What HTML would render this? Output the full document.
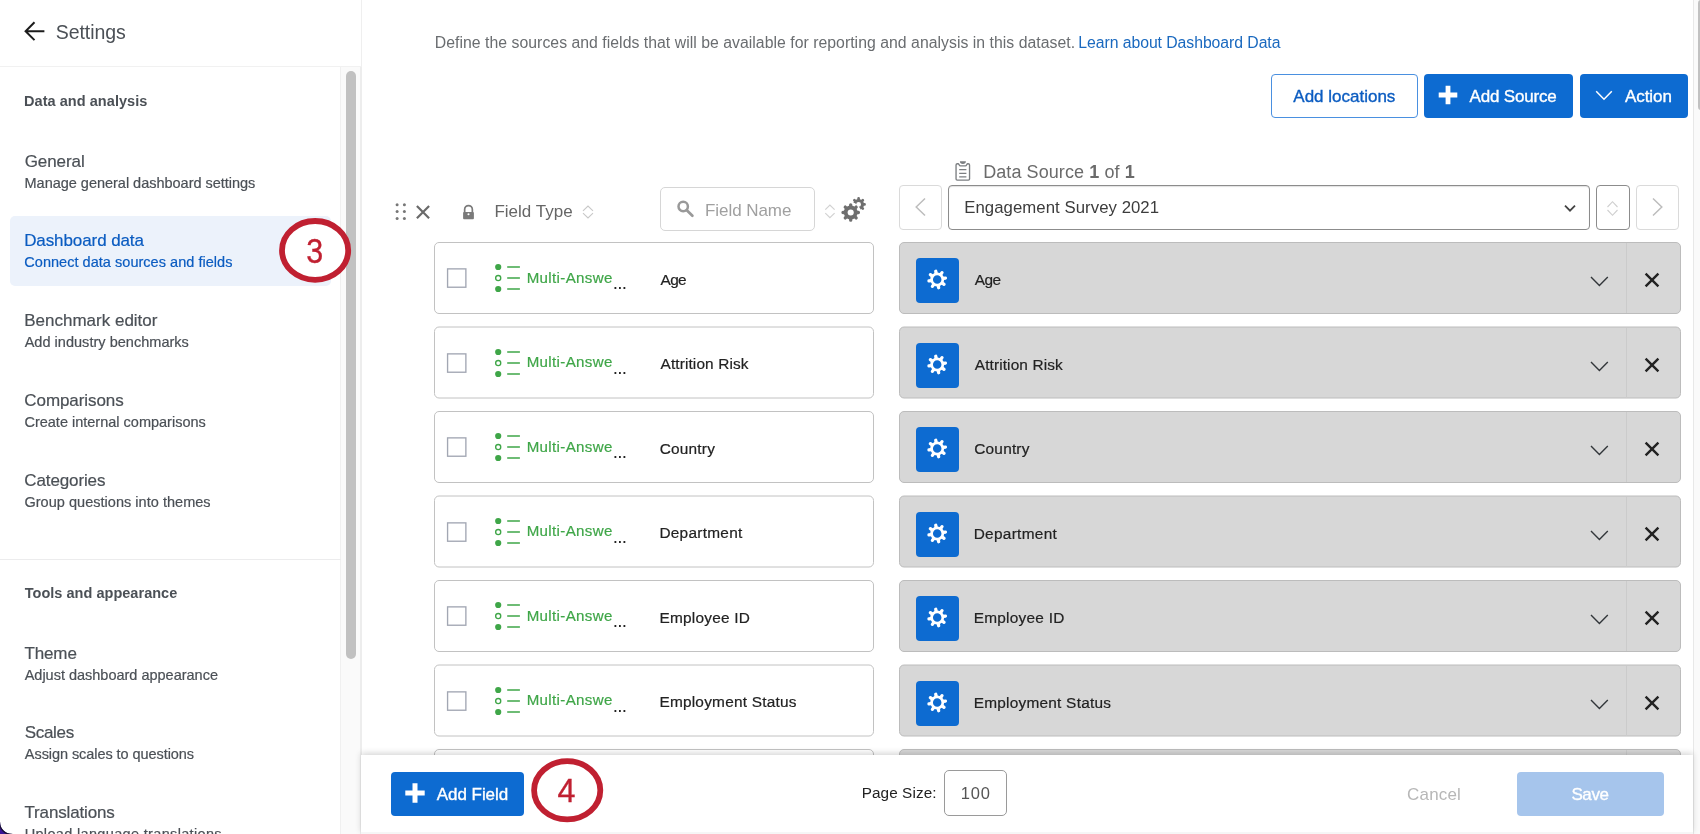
<!DOCTYPE html>
<html>
<head>
<meta charset="utf-8">
<title>Settings - Dashboard data</title>
<style>
*{box-sizing:border-box;margin:0;padding:0}
html,body{width:1700px;height:834px;overflow:hidden;background:#fff}
body{font-family:"Liberation Sans",sans-serif;position:relative;color:#32363a;will-change:transform}
.abs{position:absolute}
.t{position:absolute;white-space:nowrap;line-height:1}
/* sidebar */
#side{left:0;top:0;width:341px;height:834px;background:#fff}
#sidehead{left:0;top:0;width:362px;height:67px;background:#fff;border-bottom:1px solid #f1f1f1;border-right:1px solid #efefef}
#gutter{left:340px;top:67px;width:22px;height:767px;background:#fafafa;border-right:2px solid #ededed;border-left:1px solid #f0f0f0}
#thumb{left:345.700px;top:71px;width:10.500px;height:588px;background:#c1c1c1;border-radius:5.250px}
#sel{left:10px;top:216px;width:321px;height:70px;background:#ecf2fb;border-radius:5px}
#sdiv{left:0;top:559px;width:341px;height:1px;background:#ececed}
.h1{font-size:17px;color:#4b5056;-webkit-text-stroke:.2px currentColor}
.h2{font-size:14.5px;color:#4b5056;-webkit-text-stroke:.2px currentColor}
.hb{font-size:14.5px;font-weight:bold;color:#4b5056}
.blue{color:#0b5cc1}
.circ{border:5px solid #b8202f;border-radius:50%;background:#fff}
.cnum{color:#c02031;font-size:36px}
/* main */
#vtrack{left:1693px;top:0;width:7px;height:834px;background:#fafafa;border-left:1px solid #e8e8e8}
#vthumb{left:1698px;top:0;width:6px;height:110px;background:#c1c1c1;border-radius:3px}
.btn{border-radius:4px}
.btn.pr{background:#0d6bd1}
.btn.ol{background:#fff;border:1px solid #4a90e0}
.bt{font-size:17px;-webkit-text-stroke:0.35px currentColor}
#sbox{left:660px;top:187px;width:155px;height:44px;border:1.500px solid #d6d6d6;border-radius:5px;background:#fff}
.nb{border:1px solid #dadada;border-radius:4px;background:#fff}
#selbox{left:948px;top:185px;width:642px;height:45px;border:1px solid #8c8c8c;border-radius:4px;background:#fff;box-shadow:inset 0 1px 1px rgba(0,0,0,.12)}
#sortb{left:1596px;top:185px;width:34px;height:45px;border:1px solid #8c8c8c;border-radius:4px;background:#fff}
#rows{left:434px;top:242px;width:1259px;height:513px;overflow:hidden}
.row{position:absolute;left:0;width:1247px;height:72px}
.lc{position:absolute;left:0;top:0;width:440px;height:72px;border:1px solid transparent}
.lc::before{content:"";position:absolute;left:-1px;top:-1px;width:440px;height:72px;box-sizing:border-box;border:1px solid #c2c2c2;border-radius:5px;background:#fff}
.rc{position:absolute;left:465px;top:0;width:782px;height:72px;border:1px solid transparent}
.rc::before{content:"";position:absolute;left:-1px;top:-1px;width:782px;height:72px;box-sizing:border-box;border:1px solid #bcbcbc;border-radius:5px;background:#d7d7d7}
.hf .lc::before,.hf .rc::before{top:-1.500px;transform:translateY(.5px)}
.cb{position:absolute;left:11px;top:24px}
.ma{position:absolute;left:60px;top:20px}
.ft{left:92px;top:26.3px;font-size:15.1px;color:#3fa648;-webkit-text-stroke:.2px #3fa648}
.dots{left:177.650px;top:30px;font-size:19px;color:#222;letter-spacing:-.68px}
.fn{left:225px;top:28.4px;font-size:15.4px;-webkit-text-stroke:.2px #222;letter-spacing:.28px;color:#222}
.gb{position:absolute;left:16px;top:15px;width:43px;height:45px;border-radius:4px;background:#0d6bd1}
.gb svg{position:absolute;left:0;top:0}
.rn{left:75px;top:28.6px;font-size:15.4px;-webkit-text-stroke:.2px #222;letter-spacing:.28px;color:#222}
.chv{position:absolute;left:690px;top:33px}
.dv{position:absolute;left:726px;top:0;width:1px;height:70px;background:#cbcbcb}
.xx{position:absolute;left:744px;top:29.200px}
#foot{left:361px;top:755px;width:1332px;height:79px;background:#fff;box-shadow:0 -2px 6px rgba(0,0,0,.16)}
#psbox{left:944px;top:770px;width:63px;height:46px;border:1px solid #9a9a9a;border-radius:5px;background:#fff}
#botline{left:361px;top:832px;width:1332px;height:2px;background:#f6f6f6}
</style>
</head>
<body>
<!-- SIDEBAR -->
<div class="abs" id="side"></div>
<div class="abs" id="gutter"></div>
<div class="abs" id="thumb"></div>
<div class="abs" id="sidehead"></div>
<svg class="abs" style="left:0;top:820px" width="14" height="14" viewBox="0 0 14 14"><rect width="14" height="14" fill="#3b1496"/><path d="M0 0H14V14H12A12 12 0 0 1 0 2Z" fill="#fff"/><path d="M12.300 14.500A12.300 12.300 0 0 1 -.5 2" fill="none" stroke="#191231" stroke-width="1.300"/></svg>
<svg class="abs" style="left:23px;top:20px" width="23" height="23" viewBox="0 0 23 23"><path d="M21.400 11.200H2.600M11.500 2.300L2.600 11.200L11.500 20.100" fill="none" stroke="#1c1c1c" stroke-width="2" stroke-linejoin="miter"/></svg>
<span class="t" id="s_settings" style="left:55.73px;top:22.8px;font-size:19.5px;color:#4b5056;letter-spacing:-0.062px">Settings</span>

<span class="t hb" id="s_da" style="left:23.99px;top:94.01px;letter-spacing:0.056px">Data and analysis</span>

<span class="t h1" id="s_gen" style="left:24.73px;top:152.9px;letter-spacing:-0.078px">General</span>
<span class="t h2" id="s_gen2" style="left:24.53px;top:175.8px;letter-spacing:-0.016px">Manage general dashboard settings</span>

<div class="abs" id="sel"></div>
<span class="t h1 blue" id="s_dd" style="left:24.18px;top:232.1px;letter-spacing:-0.093px">Dashboard data</span>
<span class="t h2 blue" id="s_dd2" style="left:24.33px;top:255.1px;letter-spacing:0.03px">Connect data sources and fields</span>

<span class="t h1" id="s_be" style="left:24.28px;top:312.0px;letter-spacing:-0.003px">Benchmark editor</span>
<span class="t h2" id="s_be2" style="left:24.66px;top:334.7px;letter-spacing:0.027px">Add industry benchmarks</span>

<span class="t h1" id="s_co" style="left:24.31px;top:392.0px;letter-spacing:-0.071px">Comparisons</span>
<span class="t h2" id="s_co2" style="left:24.45px;top:415.1px;letter-spacing:0.0px">Create internal comparisons</span>

<span class="t h1" id="s_ca" style="left:24.31px;top:471.6px;letter-spacing:-0.123px">Categories</span>
<span class="t h2" id="s_ca2" style="left:24.45px;top:494.6px;letter-spacing:0.029px">Group questions into themes</span>

<div class="abs" id="sdiv"></div>
<span class="t hb" id="s_ta" style="left:24.69px;top:586.41px;letter-spacing:0.03px">Tools and appearance</span>

<span class="t h1" id="s_th" style="left:24.46px;top:644.8px;letter-spacing:-0.127px">Theme</span>
<span class="t h2" id="s_th2" style="left:24.66px;top:668.0px;letter-spacing:-0.007px">Adjust dashboard appearance</span>

<span class="t h1" id="s_sc" style="left:24.68px;top:724.2px;letter-spacing:-0.312px">Scales</span>
<span class="t h2" id="s_sc2" style="left:24.87px;top:747.4px;letter-spacing:-0.068px">Assign scales to questions</span>

<span class="t h1" id="s_tr" style="left:24.48px;top:804.0px;letter-spacing:-0.154px">Translations</span>
<span class="t h2" id="s_tr2" style="left:24.67px;top:827.2px;letter-spacing:0.337px">Upload language translations</span>

<svg class="abs" style="left:275px;top:214px" width="80" height="72" viewBox="0 0 80 72"><ellipse cx="40.1" cy="36.4" rx="33.1" ry="29.4" fill="#fff" stroke="#c02031" stroke-width="5.8"/></svg>
<span class="t cnum" id="c3n" style="left:304.7px;top:232.6px;font-size:35px;transform:scaleX(.87);-webkit-text-stroke:.35px #c02031">3</span>

<!-- MAIN -->
<div class="abs" id="vtrack"></div>
<div class="abs" id="vthumb"></div>

<span class="t" id="m_def" style="left:434.83px;top:35.0px;font-size:15.8px;color:#6a6d70;letter-spacing:0.029px">Define the sources and fields that will be available for reporting and analysis in this dataset.</span>
<span class="t" id="m_link" style="left:1078.34px;top:35.0px;font-size:15.8px;color:#1a69bf;letter-spacing:-0.064px">Learn about Dashboard Data</span>

<div class="abs btn ol" style="left:1271px;top:74px;width:147px;height:44px"></div>
<span class="t bt" id="b_al" style="left:1293.34px;top:88.1px;color:#0b5cc1;letter-spacing:-0.003px">Add locations</span>
<div class="abs btn pr" style="left:1424px;top:74px;width:149px;height:44px"></div>
<svg class="abs" style="left:1438px;top:85px" width="20" height="20" viewBox="0 0 20 20"><path d="M10 .7v18.6M.7 10h18.6" stroke="#fff" stroke-width="4.8" fill="none"/></svg>
<span class="t bt" id="b_as" style="left:1469.53px;top:88.1px;color:#fff;letter-spacing:-0.178px">Add Source</span>
<div class="abs btn pr" style="left:1580px;top:74px;width:108px;height:44px"></div>
<svg class="abs" style="left:1595px;top:90px" width="18" height="11" viewBox="0 0 18 11"><path d="M1.2 1.2l7.8 8L16.8 1.2" stroke="#fff" stroke-width="1.5" fill="none"/></svg>
<span class="t bt" id="b_ac" style="left:1624.88px;top:88.1px;color:#fff;letter-spacing:-0.04px">Action</span>

<!-- data source label -->
<svg class="abs" style="left:953px;top:159px" width="20" height="24" viewBox="0 0 20 24"><path d="M3.05 19.9V6.1Q3.05 4.75 4.4 4.75H5C6.300 4.75 5.900 6.900 7.400 6.900H12.400C13.900 6.900 13.500 4.75 14.800 4.75H15.200Q16.55 4.75 16.55 6.100V19.900Q16.55 21.05 15.400 21.05H4.200Q3.05 21.05 3.05 19.900Z" fill="none" stroke="#7b7e81" stroke-width="1.35"/><path d="M6.900 2.300H12.900A3 2.600 0 0 1 6.900 2.300Z" fill="#7b7e81"/><path d="M6.200 10.600H13.400M6.200 14.300H13.400M6.200 17.800H13.400" stroke="#7b7e81" stroke-width="1.250" fill="none"/></svg>
<span class="t" id="m_ds" style="left:983.14px;top:162.9px;font-size:18px;color:#6b6b6b;letter-spacing:0.085px">Data Source <b>1</b> of <b>1</b></span>

<!-- header toolbar -->
<svg class="abs" style="left:394px;top:202px" width="14" height="20" viewBox="0 0 14 20"><g fill="#777"><circle cx="3.1" cy="2.7" r="1.5"/><circle cx="10.4" cy="2.7" r="1.5"/><circle cx="3.1" cy="9.6" r="1.5"/><circle cx="10.4" cy="9.600" r="1.5"/><circle cx="3.1" cy="16.500" r="1.5"/><circle cx="10.4" cy="16.5" r="1.5"/></g></svg>
<svg class="abs" style="left:415px;top:204px" width="16" height="16" viewBox="0 0 16 16"><path d="M1.9 2l12.200 12.200M14.100 2L1.9 14.200" stroke="#6a6a6a" stroke-width="2.2" fill="none"/></svg>
<svg class="abs" style="left:462px;top:204px" width="13" height="17" viewBox="0 0 13 17"><path d="M2.650 8.500V5.400a3.850 3.850 0 0 1 7.700 0V8.500" fill="none" stroke="#7a7a7a" stroke-width="1.700"/><rect x="1.100" y="8" width="10.800" height="7.200" rx=".9" fill="#7a7a7a"/><circle cx="6.500" cy="10.200" r="1.050" fill="#fff"/></svg>
<span class="t" id="m_ft" style="left:494.39px;top:203.4px;font-size:17px;color:#666;letter-spacing:0.023px">Field Type</span>
<svg class="abs sorti" style="left:582px;top:205px" width="12" height="14" viewBox="0 0 12 14"><path d="M1 5.800L6 1l5 4.800M1 8.200L6 13l5-4.800" fill="none" stroke="#c8c8c8" stroke-width="1.1"/></svg>

<div class="abs" id="sbox"></div>
<svg class="abs" style="left:676px;top:199px" width="19" height="19" viewBox="0 0 19 19"><circle cx="7.200" cy="7.500" r="4.700" fill="none" stroke="#999" stroke-width="2.500"/><path d="M10.800 11.200l5.600 5.600" stroke="#999" stroke-width="2.700" stroke-linecap="round"/></svg>
<span class="t" id="m_fn" style="left:704.91px;top:202.2px;font-size:17px;color:#a0a0a0;letter-spacing:-0.042px">Field Name</span>
<svg class="abs sorti" style="left:823px;top:203px" width="14" height="17" viewBox="0 0 14 17"><path d="M2.3 6.600L6.900 2l4.700 4.600M2.300 10.100l4.600 4.600l4.700-4.600" fill="none" stroke="#d2d2d2" stroke-width="1.2"/></svg>
<svg class="abs" style="left:838px;top:193px" width="32" height="32" viewBox="0 0 32 32"><circle cx="20.60" cy="11.40" r="3.9" fill="none" stroke="#6f6f6f" stroke-width="3"/><path d="M25.20 11.40L26.55 11.40M23.85 14.65L24.81 15.61M20.60 16.00L20.60 17.35M17.35 14.65L16.39 15.61M16.00 11.40L14.65 11.40M17.35 8.15L16.39 7.19M20.60 6.80L20.60 5.45M23.85 8.15L24.81 7.19" stroke="#6f6f6f" stroke-width="2.7" stroke-linecap="round" fill="none"/><circle cx="12.70" cy="19.50" r="10.2" fill="#fff"/><circle cx="12.70" cy="19.50" r="6.9" fill="#6f6f6f"/><path d="M18.20 19.50L20.40 19.50M16.59 23.39L18.14 24.94M12.70 25.00L12.70 27.20M8.81 23.39L7.26 24.94M7.20 19.50L5.00 19.50M8.81 15.61L7.26 14.06M12.70 14.00L12.70 11.80M16.59 15.61L18.14 14.06" stroke="#6f6f6f" stroke-width="3.3" stroke-linecap="round" fill="none"/><circle cx="12.70" cy="19.50" r="3.05" fill="#fff"/></svg>

<div class="abs nb" style="left:899px;top:185px;width:43px;height:45px"></div>
<svg class="abs" style="left:914px;top:197px" width="13" height="20" viewBox="0 0 13 20"><path d="M11 1.500L2.200 10L11 18.500" fill="none" stroke="#bdbdbd" stroke-width="1.500"/></svg>
<div class="abs" id="selbox"></div>
<span class="t" id="m_es" style="left:964.24px;top:200.2px;font-size:16.75px;color:#3c3c3c;letter-spacing:0.054px">Engagement Survey 2021</span>
<svg class="abs" style="left:1563px;top:204px" width="14" height="9" viewBox="0 0 14 9"><path d="M2 1.700l5 5l5-5" fill="none" stroke="#444" stroke-width="1.800"/></svg>
<div class="abs" id="sortb"></div>
<svg class="abs sorti" style="left:1606px;top:200px" width="13" height="17" viewBox="0 0 13 17"><path d="M1.500 7L6.500 1.700l5 5.300M1.500 10L6.500 15.300l5-5.300" fill="none" stroke="#cfcfcf" stroke-width="1.100"/></svg>
<div class="abs nb" style="left:1636px;top:185px;width:43px;height:45px"></div>
<svg class="abs" style="left:1651px;top:197px" width="13" height="20" viewBox="0 0 13 20"><path d="M2 1.500L10.800 10L2 18.500" fill="none" stroke="#bdbdbd" stroke-width="1.500"/></svg>
<div class="abs" id="rows">
<div class="row" style="top:0.0px">
 <div class="lc"><svg class="cb" width="22" height="22" viewBox="0 0 22 22"><rect x="1.575" y="1.875" width="18.300" height="18.350" fill="#fff" stroke="#a2a7b3" stroke-width="1.350"/></svg>
  <svg class="ma" width="27" height="30" viewBox="0 0 27 30"><circle cx="3.2" cy="4" r="3.100" fill="#3fa648"/><circle cx="3.2" cy="15" r="2.550" fill="none" stroke="#3fa648" stroke-width="1.350"/><circle cx="3.2" cy="26" r="3.100" fill="#3fa648"/><path d="M12.2 4h12.700M12.2 15h12.700M12.2 26h12.700" stroke="#3fa648" stroke-width="1.300" fill="none"/></svg>
  <span class="t ft" id="ft0" style="margin-left:-0.39px;margin-top:0.3px;letter-spacing:0.36px">Multi-Answe</span><span class="t dots" id="dots0">...</span><span class="t fn" id="fn0" style="margin-left:0.53px;margin-top:0.31px;letter-spacing:-0.643px">Age</span></div>
 <div class="rc"><div class="gb"><svg width="43" height="45" viewBox="0 0 43 45"><circle cx="21.2" cy="21.5" r="5.6" fill="none" stroke="#fff" stroke-width="2.700"/><path d="M20.11 15.30L19.75 13.28M24.81 16.34L25.99 14.66M27.40 20.41L29.42 20.05M26.36 25.11L28.04 26.29M22.29 27.70L22.65 29.72M17.59 26.66L16.41 28.34M15.00 22.59L12.98 22.95M16.04 17.89L14.36 16.71" stroke="#fff" stroke-width="3.3" stroke-linecap="round" fill="none"/></svg></div>
  <span class="t rn" id="rn0" style="margin-left:-0.22px;margin-top:0.71px;letter-spacing:-0.505px">Age</span>
  <svg class="chv" width="19" height="11" viewBox="0 0 19 11"><path d="M1 1l8.4 8.4L17.8 1" fill="none" stroke="#32363a" stroke-width="1.4"/></svg>
  <div class="dv"></div>
  <svg class="xx" width="16" height="16" viewBox="0 0 16 16"><path d="M1.6 1.6l12.8 12.8M14.4 1.6L1.6 14.4" fill="none" stroke="#222" stroke-width="2.4"/></svg>
 </div>
</div>
<div class="row hf" style="top:84.5px">
 <div class="lc"><svg class="cb" width="22" height="22" viewBox="0 0 22 22"><rect x="1.575" y="1.875" width="18.300" height="18.350" fill="#fff" stroke="#a2a7b3" stroke-width="1.350"/></svg>
  <svg class="ma" width="27" height="30" viewBox="0 0 27 30"><circle cx="3.2" cy="4" r="3.100" fill="#3fa648"/><circle cx="3.2" cy="15" r="2.550" fill="none" stroke="#3fa648" stroke-width="1.350"/><circle cx="3.2" cy="26" r="3.100" fill="#3fa648"/><path d="M12.2 4h12.700M12.2 15h12.700M12.2 26h12.700" stroke="#3fa648" stroke-width="1.300" fill="none"/></svg>
  <span class="t ft" id="ft1" style="margin-left:-0.39px;margin-top:0.3px;letter-spacing:0.36px">Multi-Answe</span><span class="t dots" id="dots1">...</span><span class="t fn" id="fn1" style="margin-left:0.53px;margin-top:0.31px;letter-spacing:0.118px">Attrition Risk</span></div>
 <div class="rc"><div class="gb"><svg width="43" height="45" viewBox="0 0 43 45"><circle cx="21.2" cy="21.5" r="5.6" fill="none" stroke="#fff" stroke-width="2.700"/><path d="M20.11 15.30L19.75 13.28M24.81 16.34L25.99 14.66M27.40 20.41L29.42 20.05M26.36 25.11L28.04 26.29M22.29 27.70L22.65 29.72M17.59 26.66L16.41 28.34M15.00 22.59L12.98 22.95M16.04 17.89L14.36 16.71" stroke="#fff" stroke-width="3.3" stroke-linecap="round" fill="none"/></svg></div>
  <span class="t rn" id="rn1" style="margin-left:-0.22px;margin-top:0.71px;letter-spacing:0.117px">Attrition Risk</span>
  <svg class="chv" width="19" height="11" viewBox="0 0 19 11"><path d="M1 1l8.4 8.4L17.8 1" fill="none" stroke="#32363a" stroke-width="1.4"/></svg>
  <div class="dv"></div>
  <svg class="xx" width="16" height="16" viewBox="0 0 16 16"><path d="M1.6 1.6l12.8 12.8M14.4 1.6L1.6 14.4" fill="none" stroke="#222" stroke-width="2.4"/></svg>
 </div>
</div>
<div class="row" style="top:169.0px">
 <div class="lc"><svg class="cb" width="22" height="22" viewBox="0 0 22 22"><rect x="1.575" y="1.875" width="18.300" height="18.350" fill="#fff" stroke="#a2a7b3" stroke-width="1.350"/></svg>
  <svg class="ma" width="27" height="30" viewBox="0 0 27 30"><circle cx="3.2" cy="4" r="3.100" fill="#3fa648"/><circle cx="3.2" cy="15" r="2.550" fill="none" stroke="#3fa648" stroke-width="1.350"/><circle cx="3.2" cy="26" r="3.100" fill="#3fa648"/><path d="M12.2 4h12.700M12.2 15h12.700M12.2 26h12.700" stroke="#3fa648" stroke-width="1.300" fill="none"/></svg>
  <span class="t ft" id="ft2" style="margin-left:-0.39px;margin-top:0.3px;letter-spacing:0.36px">Multi-Answe</span><span class="t dots" id="dots2">...</span><span class="t fn" id="fn2" style="margin-left:-0.36px;margin-top:0.31px;letter-spacing:0.23px">Country</span></div>
 <div class="rc"><div class="gb"><svg width="43" height="45" viewBox="0 0 43 45"><circle cx="21.2" cy="21.5" r="5.6" fill="none" stroke="#fff" stroke-width="2.700"/><path d="M20.11 15.30L19.75 13.28M24.81 16.34L25.99 14.66M27.40 20.41L29.42 20.05M26.36 25.11L28.04 26.29M22.29 27.70L22.65 29.72M17.59 26.66L16.41 28.34M15.00 22.59L12.98 22.95M16.04 17.89L14.36 16.71" stroke="#fff" stroke-width="3.3" stroke-linecap="round" fill="none"/></svg></div>
  <span class="t rn" id="rn2" style="margin-left:-0.72px;margin-top:0.71px;letter-spacing:0.204px">Country</span>
  <svg class="chv" width="19" height="11" viewBox="0 0 19 11"><path d="M1 1l8.4 8.4L17.8 1" fill="none" stroke="#32363a" stroke-width="1.4"/></svg>
  <div class="dv"></div>
  <svg class="xx" width="16" height="16" viewBox="0 0 16 16"><path d="M1.6 1.6l12.8 12.8M14.4 1.6L1.6 14.4" fill="none" stroke="#222" stroke-width="2.4"/></svg>
 </div>
</div>
<div class="row hf" style="top:253.5px">
 <div class="lc"><svg class="cb" width="22" height="22" viewBox="0 0 22 22"><rect x="1.575" y="1.875" width="18.300" height="18.350" fill="#fff" stroke="#a2a7b3" stroke-width="1.350"/></svg>
  <svg class="ma" width="27" height="30" viewBox="0 0 27 30"><circle cx="3.2" cy="4" r="3.100" fill="#3fa648"/><circle cx="3.2" cy="15" r="2.550" fill="none" stroke="#3fa648" stroke-width="1.350"/><circle cx="3.2" cy="26" r="3.100" fill="#3fa648"/><path d="M12.2 4h12.700M12.2 15h12.700M12.2 26h12.700" stroke="#3fa648" stroke-width="1.300" fill="none"/></svg>
  <span class="t ft" id="ft3" style="margin-left:-0.39px;margin-top:0.3px;letter-spacing:0.36px">Multi-Answe</span><span class="t dots" id="dots3">...</span><span class="t fn" id="fn3" style="margin-left:-0.62px;margin-top:0.31px;letter-spacing:0.273px">Department</span></div>
 <div class="rc"><div class="gb"><svg width="43" height="45" viewBox="0 0 43 45"><circle cx="21.2" cy="21.5" r="5.6" fill="none" stroke="#fff" stroke-width="2.700"/><path d="M20.11 15.30L19.75 13.28M24.81 16.34L25.99 14.66M27.40 20.41L29.42 20.05M26.36 25.11L28.04 26.29M22.29 27.70L22.65 29.72M17.59 26.66L16.41 28.34M15.00 22.59L12.98 22.95M16.04 17.89L14.36 16.71" stroke="#fff" stroke-width="3.3" stroke-linecap="round" fill="none"/></svg></div>
  <span class="t rn" id="rn3" style="margin-left:-1.39px;margin-top:0.71px;letter-spacing:0.314px">Department</span>
  <svg class="chv" width="19" height="11" viewBox="0 0 19 11"><path d="M1 1l8.4 8.4L17.8 1" fill="none" stroke="#32363a" stroke-width="1.4"/></svg>
  <div class="dv"></div>
  <svg class="xx" width="16" height="16" viewBox="0 0 16 16"><path d="M1.6 1.6l12.8 12.8M14.4 1.6L1.6 14.4" fill="none" stroke="#222" stroke-width="2.4"/></svg>
 </div>
</div>
<div class="row" style="top:338.0px">
 <div class="lc"><svg class="cb" width="22" height="22" viewBox="0 0 22 22"><rect x="1.575" y="1.875" width="18.300" height="18.350" fill="#fff" stroke="#a2a7b3" stroke-width="1.350"/></svg>
  <svg class="ma" width="27" height="30" viewBox="0 0 27 30"><circle cx="3.2" cy="4" r="3.100" fill="#3fa648"/><circle cx="3.2" cy="15" r="2.550" fill="none" stroke="#3fa648" stroke-width="1.350"/><circle cx="3.2" cy="26" r="3.100" fill="#3fa648"/><path d="M12.2 4h12.700M12.2 15h12.700M12.2 26h12.700" stroke="#3fa648" stroke-width="1.300" fill="none"/></svg>
  <span class="t ft" id="ft4" style="margin-left:-0.39px;margin-top:0.3px;letter-spacing:0.36px">Multi-Answe</span><span class="t dots" id="dots4">...</span><span class="t fn" id="fn4" style="margin-left:-0.62px;margin-top:0.31px;letter-spacing:0.241px">Employee ID</span></div>
 <div class="rc"><div class="gb"><svg width="43" height="45" viewBox="0 0 43 45"><circle cx="21.2" cy="21.5" r="5.6" fill="none" stroke="#fff" stroke-width="2.700"/><path d="M20.11 15.30L19.75 13.28M24.81 16.34L25.99 14.66M27.40 20.41L29.42 20.05M26.36 25.11L28.04 26.29M22.29 27.70L22.65 29.72M17.59 26.66L16.41 28.34M15.00 22.59L12.98 22.95M16.04 17.89L14.36 16.71" stroke="#fff" stroke-width="3.3" stroke-linecap="round" fill="none"/></svg></div>
  <span class="t rn" id="rn4" style="margin-left:-1.39px;margin-top:0.71px;letter-spacing:0.254px">Employee ID</span>
  <svg class="chv" width="19" height="11" viewBox="0 0 19 11"><path d="M1 1l8.4 8.4L17.8 1" fill="none" stroke="#32363a" stroke-width="1.4"/></svg>
  <div class="dv"></div>
  <svg class="xx" width="16" height="16" viewBox="0 0 16 16"><path d="M1.6 1.6l12.8 12.8M14.4 1.6L1.6 14.4" fill="none" stroke="#222" stroke-width="2.4"/></svg>
 </div>
</div>
<div class="row hf" style="top:422.5px">
 <div class="lc"><svg class="cb" width="22" height="22" viewBox="0 0 22 22"><rect x="1.575" y="1.875" width="18.300" height="18.350" fill="#fff" stroke="#a2a7b3" stroke-width="1.350"/></svg>
  <svg class="ma" width="27" height="30" viewBox="0 0 27 30"><circle cx="3.2" cy="4" r="3.100" fill="#3fa648"/><circle cx="3.2" cy="15" r="2.550" fill="none" stroke="#3fa648" stroke-width="1.350"/><circle cx="3.2" cy="26" r="3.100" fill="#3fa648"/><path d="M12.2 4h12.700M12.2 15h12.700M12.2 26h12.700" stroke="#3fa648" stroke-width="1.300" fill="none"/></svg>
  <span class="t ft" id="ft5" style="margin-left:-0.39px;margin-top:0.3px;letter-spacing:0.36px">Multi-Answe</span><span class="t dots" id="dots5">...</span><span class="t fn" id="fn5" style="margin-left:-0.62px;margin-top:0.31px;letter-spacing:0.228px">Employment Status</span></div>
 <div class="rc"><div class="gb"><svg width="43" height="45" viewBox="0 0 43 45"><circle cx="21.2" cy="21.5" r="5.6" fill="none" stroke="#fff" stroke-width="2.700"/><path d="M20.11 15.30L19.75 13.28M24.81 16.34L25.99 14.66M27.40 20.41L29.42 20.05M26.36 25.11L28.04 26.29M22.29 27.70L22.65 29.72M17.59 26.66L16.41 28.34M15.00 22.59L12.98 22.95M16.04 17.89L14.36 16.71" stroke="#fff" stroke-width="3.3" stroke-linecap="round" fill="none"/></svg></div>
  <span class="t rn" id="rn5" style="margin-left:-1.39px;margin-top:0.71px;letter-spacing:0.244px">Employment Status</span>
  <svg class="chv" width="19" height="11" viewBox="0 0 19 11"><path d="M1 1l8.4 8.4L17.8 1" fill="none" stroke="#32363a" stroke-width="1.4"/></svg>
  <div class="dv"></div>
  <svg class="xx" width="16" height="16" viewBox="0 0 16 16"><path d="M1.6 1.6l12.8 12.8M14.4 1.6L1.6 14.4" fill="none" stroke="#222" stroke-width="2.4"/></svg>
 </div>
</div>
<div class="row" style="top:507.0px">
 <div class="lc"><svg class="cb" width="22" height="22" viewBox="0 0 22 22"><rect x="1.575" y="1.875" width="18.300" height="18.350" fill="#fff" stroke="#a2a7b3" stroke-width="1.350"/></svg>
  <svg class="ma" width="27" height="30" viewBox="0 0 27 30"><circle cx="3.2" cy="4" r="3.100" fill="#3fa648"/><circle cx="3.2" cy="15" r="2.550" fill="none" stroke="#3fa648" stroke-width="1.350"/><circle cx="3.2" cy="26" r="3.100" fill="#3fa648"/><path d="M12.2 4h12.700M12.2 15h12.700M12.2 26h12.700" stroke="#3fa648" stroke-width="1.300" fill="none"/></svg>
  <span class="t ft" id="ft6" style="margin-left:-0.39px;margin-top:0.3px;letter-spacing:0.36px">Multi-Answe</span><span class="t dots" id="dots6">...</span><span class="t fn" id="fn6" style="margin-top:0.31px">Gender</span></div>
 <div class="rc"><div class="gb"><svg width="43" height="45" viewBox="0 0 43 45"><circle cx="21.2" cy="21.5" r="5.6" fill="none" stroke="#fff" stroke-width="2.700"/><path d="M20.11 15.30L19.75 13.28M24.81 16.34L25.99 14.66M27.40 20.41L29.42 20.05M26.36 25.11L28.04 26.29M22.29 27.70L22.65 29.72M17.59 26.66L16.41 28.34M15.00 22.59L12.98 22.95M16.04 17.89L14.36 16.71" stroke="#fff" stroke-width="3.3" stroke-linecap="round" fill="none"/></svg></div>
  <span class="t rn" id="rn6" style="margin-top:0.71px">Gender</span>
  <svg class="chv" width="19" height="11" viewBox="0 0 19 11"><path d="M1 1l8.4 8.4L17.8 1" fill="none" stroke="#32363a" stroke-width="1.4"/></svg>
  <div class="dv"></div>
  <svg class="xx" width="16" height="16" viewBox="0 0 16 16"><path d="M1.6 1.6l12.8 12.8M14.4 1.6L1.6 14.4" fill="none" stroke="#222" stroke-width="2.4"/></svg>
 </div>
</div>
</div>
<div class="abs" id="foot"></div>
<div class="abs btn pr" style="left:391px;top:772px;width:133px;height:44px"></div>
<svg class="abs" style="left:405px;top:783px" width="20" height="20" viewBox="0 0 20 20"><path d="M10 .3v19.400M.3 10h19.400" stroke="#fff" stroke-width="5" fill="none"/></svg>
<span class="t bt" id="b_af" style="left:436.82px;top:785.8px;color:#fff;letter-spacing:-0.056px">Add Field</span>
<svg class="abs" style="left:528px;top:755px" width="80" height="72" viewBox="0 0 80 72"><ellipse cx="39.200" cy="35.300" rx="33.100" ry="29.100" fill="#fff" stroke="#c02031" stroke-width="5.800"/></svg>
<span class="t cnum" id="c4n" style="left:557px;top:773px;font-size:34px;transform:scaleX(.95);-webkit-text-stroke:.35px #c02031">4</span>
<span class="t" id="m_ps" style="left:861.71px;top:784.5px;font-size:15.3px;color:#222;letter-spacing:0.088px">Page Size:</span>
<div class="abs" id="psbox"></div>
<span class="t" id="m_100" style="left:960.65px;top:784.9px;font-size:16.5px;color:#555;letter-spacing:0.905px">100</span>
<span class="t" id="m_cancel" style="left:1407.06px;top:785.91px;font-size:17px;color:#b7b7b7;letter-spacing:0.186px">Cancel</span>
<div class="abs btn" style="left:1517px;top:772px;width:147px;height:44px;background:#a6c5ec"></div>
<span class="t bt" id="b_save" style="left:1571.42px;top:785.9px;color:#fff;letter-spacing:-0.403px">Save</span>
<div class="abs" id="botline"></div>

</body>
</html>
